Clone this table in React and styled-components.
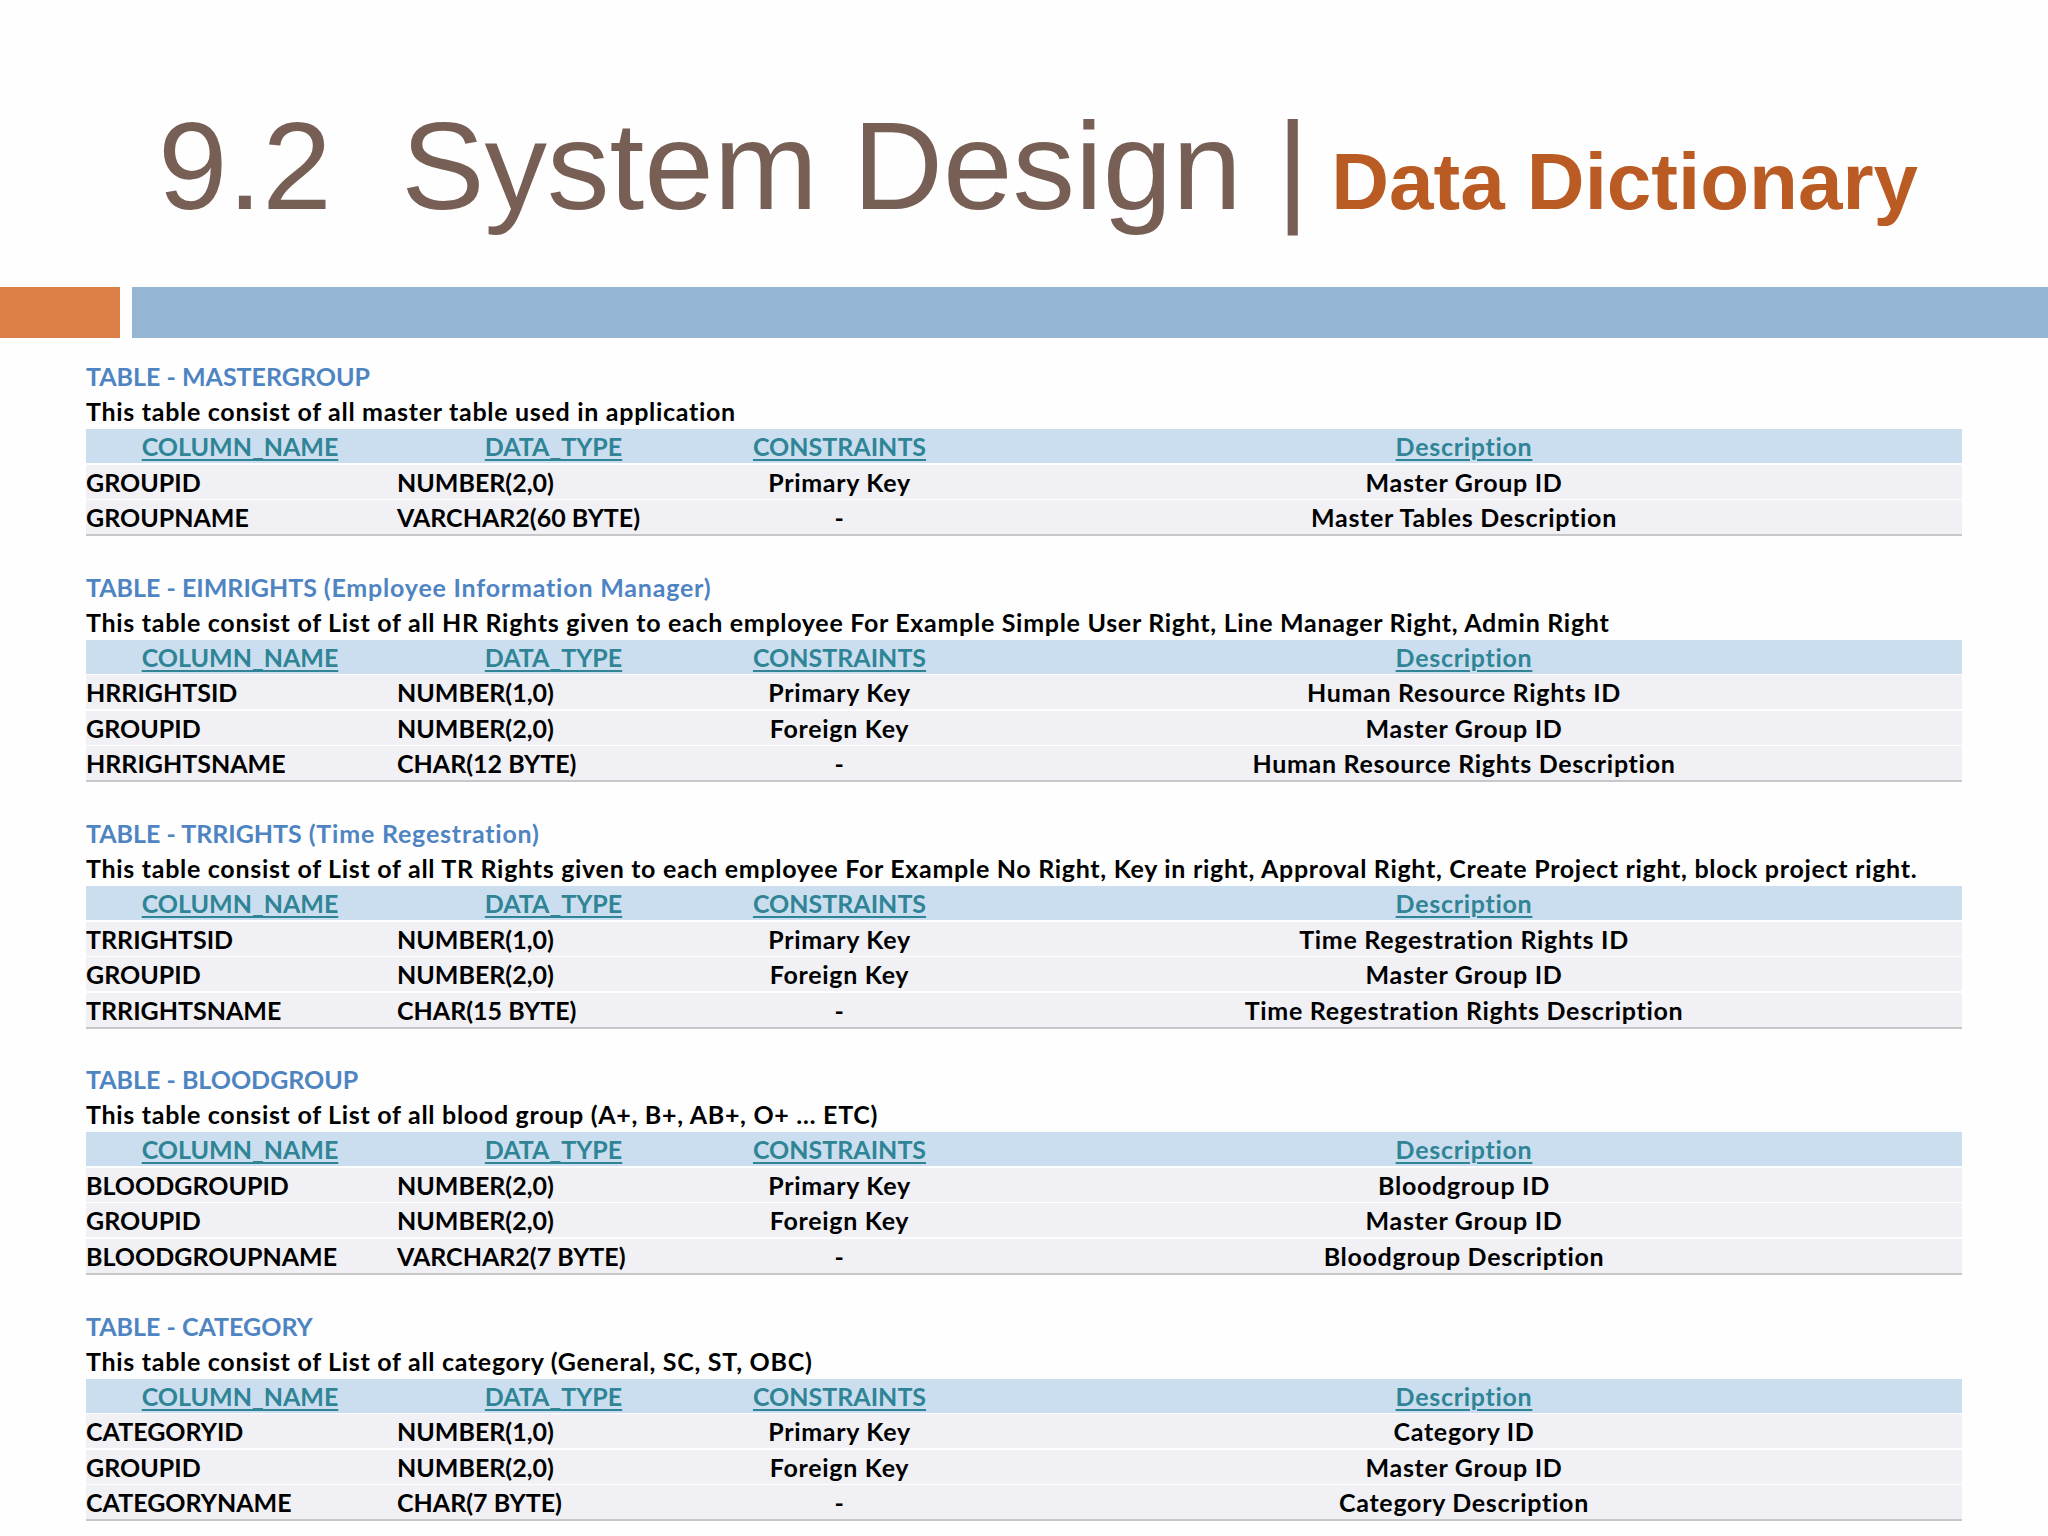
import React from "react";
import styled, { createGlobalStyle } from "styled-components";

const Global = createGlobalStyle`
  html, body { margin: 0; padding: 0; background: #ffffff; }
  body { width: 2048px; height: 1536px; overflow: hidden; }
`;

const Page = styled.div`
  width: 2048px;
  height: 1536px;
  background: #fefefe;
  overflow: hidden;
`;

const TitleBlock = styled.div`
  height: 287px;
  box-sizing: border-box;
  padding: 103px 0 0 158px;
  font-family: "Liberation Sans", Arial, sans-serif;
  font-size: 125px;
  line-height: 125px;
  color: #775f55;
  white-space: pre;
`;

const Accent = styled.span`
  font-size: 80px;
  font-weight: 700;
  color: #b95b22;
`;

const BarRow = styled.div`
  display: flex;
  gap: 12px;
  height: 51px;
`;

const Bar = styled.div`
  background: ${(p) => p.$color};
  width: ${(p) => p.$width || "auto"};
  flex: ${(p) => (p.$grow ? "1 1 auto" : "none")};
`;

const Content = styled.div`
  padding: 21px 86px 0;
  font-family: Lato, "Open Sans", sans-serif;
  font-weight: 700;
  font-size: 25px;
  color: #000;
`;

const Block = styled.section`
  margin-bottom: 33.5px;
`;

const Heading = styled.div`
  height: 35px;
  line-height: 35px;
  color: #4f84c3;
  white-space: nowrap;
`;

const Paren = styled.span`
  letter-spacing: 0.8px;
`;

const Desc = styled.div`
  height: 35px;
  line-height: 35px;
  white-space: nowrap;
  letter-spacing: 0.7px;
`;

const Table = styled.div`
  border-bottom: 2px solid #c7c7c9;
`;

const Row = styled.div`
  display: grid;
  grid-template-columns: 308px 319px 253px 1fr;
  height: 34px;
  line-height: 34px;
  background: ${(p) => (p.$head ? "#cbdeef" : "#f1f0f4")};
  margin-bottom: ${(p) => (p.$last ? "0" : "1.6px")};
`;

const HeadCell = styled.div`
  text-align: center;
  color: #2f8495;
  text-decoration: underline;
  text-decoration-thickness: 2px;
  text-underline-offset: 3px;
  letter-spacing: ${(p) => (p.$mixed ? "0.7px" : "0")};
`;

const Cell = styled.div`
  text-align: ${(p) => (p.$center ? "center" : "left")};
  padding-left: ${(p) => (p.$pad ? "3px" : "0")};
  white-space: nowrap;
  letter-spacing: ${(p) => (p.$mixed ? "0.7px" : "0")};
`;

const tables = [
  {
    title: "TABLE - MASTERGROUP",
    desc: "This table consist of all master table used in application",
    rows: [
      ["GROUPID", "NUMBER(2,0)", "Primary Key", "Master Group ID"],
      ["GROUPNAME", "VARCHAR2(60 BYTE)", "-", "Master Tables Description"],
    ],
  },
  {
    title: "TABLE - EIMRIGHTS",
    sub: "(Employee Information Manager)",
    desc:
      "This table consist of List of all HR Rights given to each employee For Example Simple User Right, Line Manager Right, Admin Right",
    rows: [
      ["HRRIGHTSID", "NUMBER(1,0)", "Primary Key", "Human Resource Rights ID"],
      ["GROUPID", "NUMBER(2,0)", "Foreign Key", "Master Group ID"],
      ["HRRIGHTSNAME", "CHAR(12 BYTE)", "-", "Human Resource Rights Description"],
    ],
  },
  {
    title: "TABLE - TRRIGHTS",
    sub: "(Time Regestration)",
    desc:
      "This table consist of List of all TR Rights given to each employee For Example No Right, Key in right, Approval Right, Create Project right, block project right.",
    rows: [
      ["TRRIGHTSID", "NUMBER(1,0)", "Primary Key", "Time Regestration Rights ID"],
      ["GROUPID", "NUMBER(2,0)", "Foreign Key", "Master Group ID"],
      ["TRRIGHTSNAME", "CHAR(15 BYTE)", "-", "Time Regestration Rights Description"],
    ],
  },
  {
    title: "TABLE - BLOODGROUP",
    desc: "This table consist of List of all blood group (A+, B+, AB+, O+ … ETC)",
    rows: [
      ["BLOODGROUPID", "NUMBER(2,0)", "Primary Key", "Bloodgroup ID"],
      ["GROUPID", "NUMBER(2,0)", "Foreign Key", "Master Group ID"],
      ["BLOODGROUPNAME", "VARCHAR2(7 BYTE)", "-", "Bloodgroup Description"],
    ],
  },
  {
    title: "TABLE - CATEGORY",
    desc: "This table consist of List of all category (General, SC, ST, OBC)",
    rows: [
      ["CATEGORYID", "NUMBER(1,0)", "Primary Key", "Category ID"],
      ["GROUPID", "NUMBER(2,0)", "Foreign Key", "Master Group ID"],
      ["CATEGORYNAME", "CHAR(7 BYTE)", "-", "Category Description"],
    ],
  },
];

const headers = ["COLUMN_NAME", "DATA_TYPE", "CONSTRAINTS", "Description"];

export default function App() {
  return (
    <Page>
      <Global />
      <TitleBlock>
        {"9.2  System Design |"}
        <Accent>{" Data Dictionary"}</Accent>
      </TitleBlock>
      <BarRow>
        <Bar $color="#dd8047" $width="120px" />
        <Bar $color="#94b6d2" $grow />
      </BarRow>
      <Content>
        {tables.map((t) => (
          <Block key={t.title}>
            <Heading>
              {t.title}
              {t.sub && <Paren>{" " + t.sub}</Paren>}
            </Heading>
            <Desc>{t.desc}</Desc>
            <Table>
              <Row $head>
                {headers.map((h, i) => (
                  <HeadCell key={h} $mixed={i === 3}>
                    {h}
                  </HeadCell>
                ))}
              </Row>
              {t.rows.map((r, i) => (
                <Row key={r[0] + i} $last={i === t.rows.length - 1}>
                  <Cell>{r[0]}</Cell>
                  <Cell $pad>{r[1]}</Cell>
                  <Cell $center $mixed>
                    {r[2]}
                  </Cell>
                  <Cell $center $mixed>
                    {r[3]}
                  </Cell>
                </Row>
              ))}
            </Table>
          </Block>
        ))}
      </Content>
    </Page>
  );
}
